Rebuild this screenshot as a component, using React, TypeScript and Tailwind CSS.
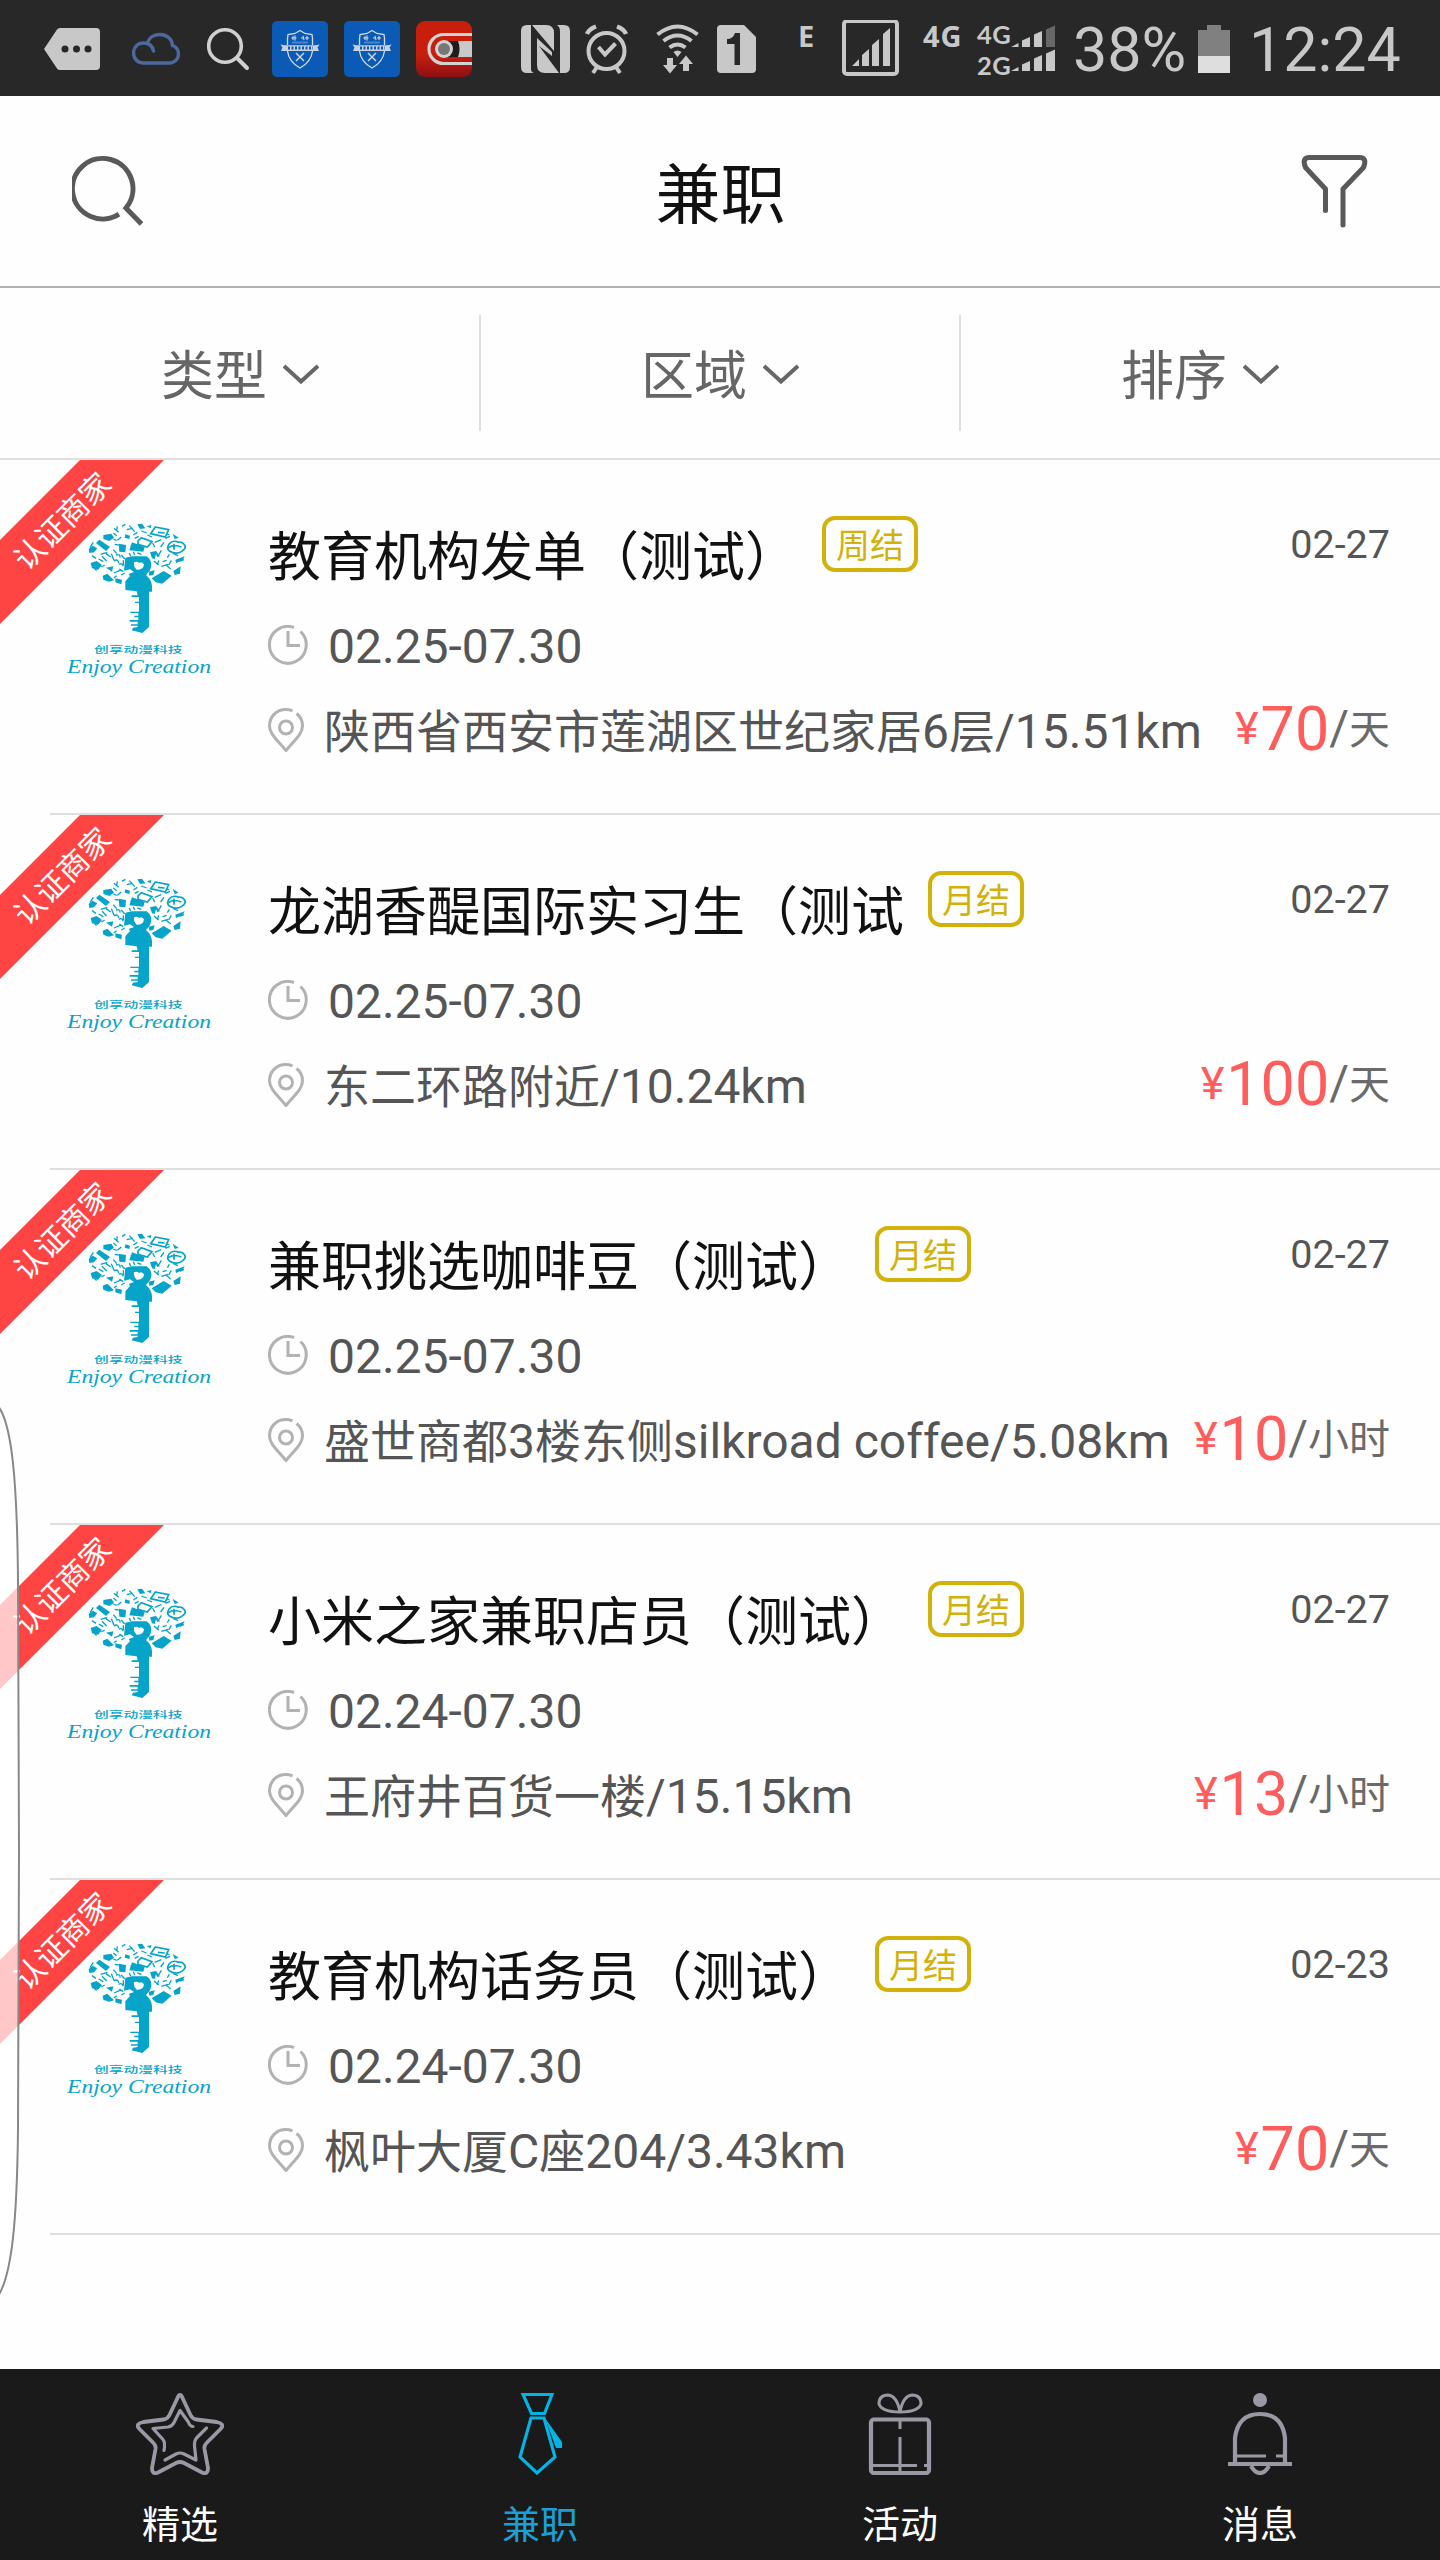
import React from "react";

type Job = {
  title: string;
  badge: string;
  date: string;
  period: string;
  place: string;
  price: string;
  unit: string;
};

const jobs: Job[] = [
  { title: "教育机构发单（测试）", badge: "周结", date: "02-27", period: "02.25-07.30", place: "陕西省西安市莲湖区世纪家居6层/15.51km", price: "70", unit: "天" },
  { title: "龙湖香醍国际实习生（测试", badge: "月结", date: "02-27", period: "02.25-07.30", place: "东二环路附近/10.24km", price: "100", unit: "天" },
  { title: "兼职挑选咖啡豆（测试）", badge: "月结", date: "02-27", period: "02.25-07.30", place: "盛世商都3楼东侧silkroad coffee/5.08km", price: "10", unit: "小时" },
  { title: "小米之家兼职店员（测试）", badge: "月结", date: "02-27", period: "02.24-07.30", place: "王府井百货一楼/15.15km", price: "13", unit: "小时" },
  { title: "教育机构话务员（测试）", badge: "月结", date: "02-23", period: "02.24-07.30", place: "枫叶大厦C座204/3.43km", price: "70", unit: "天" },
];

function ShieldApp({ className }: { className: string }) {
  return (
    <svg className={className} viewBox="0 0 56 56" fill="none" stroke="#d3d9e2">
      <rect width="56" height="56" rx="5" fill="#0b5ab6" stroke="none" />
      <path d="M28 9.500l5 3 7 1 .5 4V24M28 9.500l-5 3-7 1-.5 4V24M15.500 30c1 8 5 13 12.500 17 7.500-4 11.500-9 12.500-17" strokeWidth="1.300" />
      <path d="M21 15v4M23 14.500v5M19.500 17h5M31 15l1 4M35 15v4M29 17h2M33 17h4" strokeWidth="1.100" />
      <path d="M20 21.500h16" stroke="#4a86cc" strokeWidth="2" />
      <path d="M8.500 23.500l4 .7h31l4-.7-2 3 1.500 3.500H9l1.500-3.500z" fill="#c6d2e2" stroke="none" />
      <path d="M16 27h25" stroke="#0b5ab6" strokeWidth="3" strokeDasharray="2 1.500" />
      <path d="M24 32l8 8M32 32l-8 8" strokeWidth="1.400" />
    </svg>
  );
}

function SignalIcons() {
  return (
    <svg className="h-14 w-[45px]" viewBox="1011 20 45 56" fill="#c8c8c8">
      <path d="M1011 47l7.500-4v4zM1022 40.500l8-3.500v10h-8zM1034 34.500l8-3.500v16h-8z" />
      <path d="M1046 29.500l9-4V47h-9z" fill="#686868" />
      <path d="M1011 71l7.500-4v4zM1022 64.500l8-3.500v10h-8zM1034 58.500l8-3.500v16h-8zM1046 53.500l9-4V71h-9z" />
    </svg>
  );
}

function StatusBar() {
  return (
    <div className="flex h-24 items-start bg-[#282828] pt-5 pl-11 text-[#c8c8c8]">
      <svg className="h-14 w-14" viewBox="44 20 56 56">
        <path d="M60 28h36q4 0 4 4v34q0 4-4 4H60q-2 0-3-1.500L44 49l13-19.500Q58 28 60 28z" fill="#c8c8c8" />
        <g fill="#282828"><circle cx="65" cy="49" r="3.500" /><circle cx="76.500" cy="49" r="3.500" /><circle cx="88" cy="49" r="3.500" /></g>
      </svg>
      <svg className="ml-8 h-14 w-12" viewBox="132 20 48 56" fill="none" stroke="#4c689e" strokeWidth="3.400" strokeLinecap="round">
        <path d="M153.500 51c-1-5-4.500-8-10-8-6 0-10 4.500-10 10 0 6 4.500 10 10 10h26c5 0 9-4 9-9 0-4-2-7-6-8.500C172 39 167 34.500 159.500 34.500c-6 0-10.500 3.500-12 8" />
      </svg>
      <svg className="ml-[27px] h-14 w-[43px]" viewBox="207 20 43 56" fill="none" stroke="#d0d0d0" strokeLinecap="round">
        <circle cx="225" cy="46" r="16.300" strokeWidth="3.600" />
        <path d="M237 58l10 10" strokeWidth="4" />
      </svg>
      <ShieldApp className="mt-px ml-[22px] h-14 w-14" />
      <ShieldApp className="mt-px ml-4 h-14 w-14" />
      <svg className="mt-px ml-4 h-14 w-14" viewBox="0 0 56 56" fill="none">
        <defs>
          <linearGradient id="tape" x1="0" y1="0" x2="0" y2="1">
            <stop offset="0.600" stopColor="#c81e0c" />
            <stop offset="1" stopColor="#8e1014" />
          </linearGradient>
        </defs>
        <rect width="56" height="56" rx="9" fill="url(#tape)" />
        <path d="M56 13.500H27.500a14.500 14.500 0 000 29H56" stroke="#d2d2d2" strokeWidth="3.200" />
        <path d="M56 20H28v16h28z" fill="#c9c9c9" />
        <path d="M32 20h10q3 8 0 16H32z" fill="#231a1a" />
        <circle cx="28" cy="28" r="9" fill="#d2d2d2" />
        <circle cx="28" cy="28" r="6" fill="#777" />
      </svg>
      <svg className="ml-[49px] h-14 w-[49px]" viewBox="521 20 49 56" fill="#c8c8c8">
        <path d="M527 25h4v44q0 3 3 4h-7q-6 0-6-6V31q0-6 6-6z" />
        <path d="M532 25h14q8 0 8 8v18z" />
        <path d="M557 25h7q6 0 6 6v36q0 6-6 6h-4V31q0-4-3-6z" />
        <path d="M559 73h-14q-8 0-8-8V38l15 14v4l-13-10z" />
      </svg>
      <svg className="ml-[15px] h-14 w-[43px]" viewBox="585 20 43 56" fill="none" stroke="#c8c8c8" strokeWidth="4">
        <circle cx="606.500" cy="51" r="18" />
        <path d="M587 34q2-5 9-7.500M626 34q-2-5-9-7.500" strokeWidth="4.500" />
        <path d="M598.500 47l6.500 7.500 10.500-11M597 67l-4 6M616 67l4 6" />
      </svg>
      <svg className="ml-[28px] h-14 w-[43px]" viewBox="656 20 43 56" fill="none" stroke="#c8c8c8" strokeWidth="4">
        <path d="M657.500 34.500q20-16 40 0M663.500 41q14-11 28 0M669.500 47.500q8-6 16 0" />
        <path d="M677.500 57l-4-5q4-3 8 0zM667 58h6v7h4l-7 8.500-7-8.500h4zM683 71h6v-7h4l-7-8.500-7 8.500h4z" fill="#c8c8c8" stroke="none" />
      </svg>
      <svg className="ml-[18px] h-14 w-[39px]" viewBox="717 20 39 56">
        <path d="M721 25h23l12 12v32q0 4-4 4h-31q-4 0-4-4V29q0-4 4-4z" fill="#c8c8c8" />
        <path d="M734.500 65V44H727v-5q6 0 8-6h5v32z" fill="#282828" />
      </svg>
      <span className="ml-[42px] w-[44px] font-['Noto_Sans'] text-[29px] leading-8 font-bold">E</span>
      <svg className="h-14 w-[57px]" viewBox="842 20 57 56">
        <rect x="844" y="21" width="53" height="53" rx="3" fill="none" stroke="#c8c8c8" strokeWidth="4" />
        <path d="M852 66l7-7v7zM862 66V55l7-6v17zM872 66V45l7-6v27zM883 66V34l7-6v38z" fill="#c8c8c8" />
      </svg>
      <span className="ml-[24px] w-[54px] font-['Noto_Sans'] text-[29px] leading-8 font-bold tracking-[1px]">4G</span>
      <div className="-mt-px w-[34px] font-[Lato] text-[25.500px] leading-[31px] font-bold tracking-[0.5px]">
        <div>4G</div>
        <div>2G</div>
      </div>
      <SignalIcons />
      <span className="ml-[17px] w-[125px] text-[61px] leading-[61px]">38%</span>
      <svg className="h-14 w-8" viewBox="1197 20 32 56">
        <path d="M1206 25h14v5h9v27h-32V30h9z" fill="#808080" />
        <path d="M1197 56h32v17h-32z" fill="#dedede" />
      </svg>
      <span className="ml-[19px] text-[61px] leading-[61px]">12:24</span>
    </div>
  );
}

function Header() {
  return (
    <div className="flex h-48 items-center justify-between border-b-2 border-[#b0b0b0] pr-[70px] pl-[72px]">
      <svg className="h-[72px] w-[72px]" viewBox="0 0 72 72" fill="none" stroke="#595959" strokeWidth="5">
        <path d="M47 59.200A30.300 30.300 0 1 1 54 53L69.500 69" />
      </svg>
      <h1 className="-ml-[3px] pt-[9px] text-[65px] leading-[64px] text-[#111]">兼职</h1>
      <svg className="h-[74px] w-[70px]" viewBox="1300 154 70 74" fill="none" stroke="#595959" strokeWidth="5" strokeLinecap="round" strokeLinejoin="round">
        <path d="M1325.500 210.500V189l-20-21.500q-4-10 4-10h50q8 0 4 10L1343 189v36" />
      </svg>
    </div>
  );
}

function Filters() {
  return (
    <div className="grid h-[172px] grid-cols-3 border-b-2 border-[#e0dede]">
      {["类型", "区域", "排序"].map((label, i) => (
        <div key={label} className="relative flex items-center justify-center gap-4 pt-[7px] text-[53px] leading-[60px] text-[#666]">
          {label}
          <svg className="-mt-[5px] h-5 w-9" viewBox="0 0 36 20" fill="none" stroke="#666" strokeWidth="4">
            <path d="M1 2l17 15.500L35 2" />
          </svg>
          {i < 2 && <div className="absolute top-[27px] -right-px h-[116px] w-0.5 bg-[#e0dede]" />}
        </div>
      ))}
    </div>
  );
}

function Logo() {
  return (
    <svg className="mt-[60px] ml-[60px] h-[168px] w-40 shrink-0" viewBox="180 195 480 504" fill="none" stroke="#06a4c8" strokeWidth="5">
      <g fill="#06a4c8" stroke="none">
        <path fillRule="evenodd" d="M376 308l20-4h44q22 16 10 42l-12 14q18 16 18 34v16h-9v106l-20 18-32-8 4-8 14-2v-4h-20v-4h20v-8h-24v-5h26v-8h-12v-5h12v-8h-24v-4h26v-26h-12v-4h12v-14h-22v-5h18l-3-12-34-4v-26l14-16-4-6 16-6-12-8-18 4zM402 322q-2 14 8 22 20 2 22-16-8-10-14-4-8-6-16-2z" />
        <path d="M298 254l32 22-12 12-30-24zM310 240l24-4 8 12-14 10-18-6zM455 370l36-22 24 14-28 24-20-4zM412 208l14-2 10 14-16 2zM376 238l14 4-2 10-14-4zM396 262l38 14-4 14-42-4zM356 266l22 4-2 22-18-2zM266 282l12-10 14 8-10 12-14 2zM272 324l18-6 16 12-12 14-18-4zM308 362l14-6 20 20-16 4-16-6zM318 338l22-4-4 16zM346 370l20 4-2 14-18-6zM446 350l18-4-4 14-12 2zM520 348l22-14-2 22-16 4zM526 314l28-10-6 12-20 8zM450 292l18-4 12 16-8 2-4-8-4 14-8-2zM518 236l18 12-12 4zM440 214l14-4-2 10z" />
      </g>
      <g>
        <path d="M466 216l40 8-10 22-44-10zM414 258l10-10 32 12-14 16-28-8zM474 232l20 2M536 262q-18-8-28 4t0 22q20 12 36 2t10-20q-8-12-22-8M506 278q14-12 38-2M522 266v18" />
        <path d="M342 220l14 12M352 214l-2 14M366 214l10-6M388 212l16 18M380 224l18-4M340 234l10 8M442 240l14 6M484 254l-20 8M492 262l-10 14M458 264l6 12" strokeWidth="4" />
        <path d="M280 262l-10 16M302 298l20-6M318 296l14 10M306 304l14 14M334 296l8 20M348 300q14-4 12 8M342 318q12-8 14 6M340 284l10 12M276 302l12 8M296 312l14 8M364 300l10 12M370 316v14M356 328q10-6 14 6" strokeWidth="4" />
        <path d="M388 294l4 10M400 290l4 10M412 294l12 4M484 286l-8 14M488 320l12-4M484 334l20-6M462 318l14 12M476 316l-4 14M498 330l14 12M514 316l-8 14M520 296l14 6M508 298l-6 10M540 318l12-4M342 354l18-8M350 362l-8 6M314 330l-10 6M290 346l-6-4M358 342l12 8M364 360l10-6" strokeWidth="4" />
        <path d="M400 240l12-8M404 250l12-6M424 228l16 6M364 246l-12 10M350 256l-10-4M344 268l12 2M392 272l34 8M362 276h14M360 284h16M500 236l8 4M496 250l14-6" strokeWidth="4" />
      </g>
      <g fill="#06a4c8" stroke="none">
        <text x="282" y="593" textLength="266" lengthAdjust="spacingAndGlyphs" fontSize="27" className="font-['Noto_Sans_CJK_SC',sans-serif] font-medium">创享动漫科技</text>
        <text x="201" y="655" textLength="432" lengthAdjust="spacingAndGlyphs" fontSize="58" fontStyle="italic" className="font-['Liberation_Serif',serif]">Enjoy Creation</text>
      </g>
    </svg>
  );
}

/* Latin runs are set slightly larger than the Chinese characters around them. */
function Place({ text }: { text: string }) {
  const runs = text.match(/[\u4e00-\u9fff]+|[^\u4e00-\u9fff]+/g) ?? [];
  return (
    <span className="whitespace-pre">
      {runs.map((run, i) => (
        <span key={i} className={/[\u4e00-\u9fff]/.test(run) ? "text-[46px]" : "text-[48px]"}>{run}</span>
      ))}
    </span>
  );
}

function JobRow({ job }: { job: Job }) {
  return (
    <div className="relative h-[355px] overflow-hidden">
      <div className="flex h-[353px]">
        <Logo />
        <div className="ml-12 flex-1 pt-[66px] pr-[50px] text-[#555]">
          <div className="flex h-16 items-start">
            <h2 className="text-[53px] leading-[64px] whitespace-nowrap text-[#111]">{job.title}</h2>
            <span className="-mt-[10px] ml-6 flex h-14 w-24 items-center justify-center rounded-[13px] border-4 border-[#d2b20a] pt-[3px] text-[34px] leading-10 text-[#d2b20a]">{job.badge}</span>
            <span className="mt-px ml-auto text-[39.500px] leading-9">{job.date}</span>
          </div>
          <div className="mt-[29px] flex h-14 items-center text-[48px] leading-[56px]">
            <svg className="-mt-1 mr-5 h-10 w-10" viewBox="0 0 40 40" fill="none" stroke="#b2b2b2" strokeWidth="3">
              <path d="M26 2.500A18.400 18.400 0 1 0 32.500 6.500M20 6v14.500h12" />
            </svg>
            {job.period}
          </div>
          <div className="mt-[29px] flex h-14 items-center text-[48px] leading-[56px]">
            <svg className="-mt-1 mr-5 h-11 w-9 shrink-0" viewBox="0 0 36 44" fill="none" stroke="#b2b2b2" strokeWidth="3">
              <path d="M24.500 2.800Q21 1.500 18 1.500C8 1.500 1.500 9 1.500 18c0 8 8 14 16.500 24.500C26.500 32 34.500 26 34.500 18c0-5-2-9.500-6-12.500" />
              <circle cx="18" cy="19.500" r="6.500" />
            </svg>
            <Place text={job.place} />
            <span className="ml-auto flex items-baseline whitespace-nowrap text-[#ff5c5c]">
              <span className="relative -top-1.5 mr-0.5 text-[45px]">¥</span>
              <span className="text-[61px]">{job.price}</span>
              <span className="relative -top-1.5 text-[48px] text-[#6a6a6a]">/</span>
              <span className="relative -top-1.5 text-[41px] text-[#6a6a6a]">{job.unit}</span>
            </span>
          </div>
        </div>
      </div>
      <div className="ml-[50px] h-0.5 bg-[#e0dede]" />
      <div className="absolute top-0 left-0 h-[164px] w-[164px]">
        <svg className="h-full w-full" viewBox="0 0 164 164">
          <path d="M80 0h84L0 164V80z" fill="#ff4444" />
        </svg>
        <span className="absolute top-[42px] left-[2px] w-[122px] -rotate-45 text-center text-[30.500px] leading-10 text-white">认证商家</span>
      </div>
    </div>
  );
}

const tabs = [
  {
    label: "精选",
    icon: (
      <svg className="h-[82px] w-[88px]" viewBox="136 2393 88 82" fill="none" stroke="#9999a6" strokeWidth="3.800" strokeLinejoin="round" strokeLinecap="round">
        <path d="M180 2395q1.500 0 2.500 3l8 17q2 4 6 4.500l20 2.500q9 2 4 7l-14 14q-2.500 2.500-2 6l3.500 19q0 7-6 4.500l-18-9.500q-4-2-8 0l-18 9.500q-6 2.500-6-4.500l3.500-19q.5-3.500-2-6l-14-14q-5-5 4-7l20-2.500q4-.5 6-4.500l8-17q1-3 2.500-3z" />
        <path d="M193 2426.500q-3 0-5-5l-8-11-6 12q-2 4-6 4.500l-15 1.500 10 11q2.500 3 1 11M165 2460l11-6q4-2 8 0l12 6-1.500-14q-.5-5 2-8l10-10" strokeWidth="3.200" />
      </svg>
    ),
  },
  {
    label: "兼职",
    icon: (
      <svg className="h-[82px] w-[44px]" viewBox="518 2393 44 82" fill="none" stroke="#03b3e4" strokeWidth="3.200">
        <path d="M523 2394.500h29l-7.500 19h-13zM531 2418h13l11 39-18 16-17-16z" />
        <path d="M545 2418l17 24v6h-6z" fill="#03b3e4" stroke="none" />
      </svg>
    ),
  },
  {
    label: "活动",
    icon: (
      <svg className="h-[82px] w-[64px]" viewBox="868 2393 64 82" fill="none" stroke="#9999a6" strokeWidth="4.200">
        <rect x="871" y="2419.500" width="58" height="53.500" rx="3" />
        <path d="M900 2412q-3-16-12-17-9 0-9 9 3 8 21 8zM900 2412q3-16 12-17 9 0 9 9-3 8-21 8z" strokeWidth="3" />
        <path d="M900 2421v8M900 2437v35M873 2465.500h44M924 2465.500h4" strokeWidth="3" />
      </svg>
    ),
  },
  {
    label: "消息",
    icon: (
      <svg className="h-[82px] w-[66px]" viewBox="1227 2393 66 82" fill="none" stroke="#9999a6" strokeWidth="4.200">
        <circle cx="1260" cy="2400" r="7" fill="#9999a6" stroke="none" />
        <path d="M1228 2464h64M1235 2464v-26q3-24 25-24t25 24v26M1251 2466q4 7 9 7t9-7" />
        <path d="M1237 2456h29M1276 2456h8" strokeWidth="3" />
      </svg>
    ),
  },
];

function TabBar() {
  return (
    <div className="grid h-[191px] grid-cols-4 bg-[#1a1a1a]">
      {tabs.map((tab) => (
        <div key={tab.label} className="flex flex-col items-center pt-6 text-white">
          {tab.icon}
          <span className={tab.label === "兼职" ? "mt-[26px] text-[38px] leading-[48px] text-[#1a9fd6]" : "mt-[26px] text-[38px] leading-[48px]"}>{tab.label}</span>
        </div>
      ))}
    </div>
  );
}

export default function App() {
  return (
    <div className="relative flex h-[2560px] w-[1440px] flex-col overflow-hidden bg-[#fefefe] font-[Roboto,'Noto_Sans_CJK_SC',sans-serif]">
      <StatusBar />
      <Header />
      <Filters />
      <div className="flex-1">
        {jobs.map((job) => (
          <JobRow key={job.title} job={job} />
        ))}
      </div>
      <TabBar />
      <svg className="absolute top-[1400px] left-0 h-[900px] w-6" viewBox="0 1400 24 900">
        <path d="M-2 1406C12 1424 17 1480 18 1578Q19 1700 19 1850T18 2130C17 2220 12 2275-2 2296z" fill="#fff" fillOpacity="0.700" stroke="#888" strokeWidth="2" />
      </svg>
    </div>
  );
}
